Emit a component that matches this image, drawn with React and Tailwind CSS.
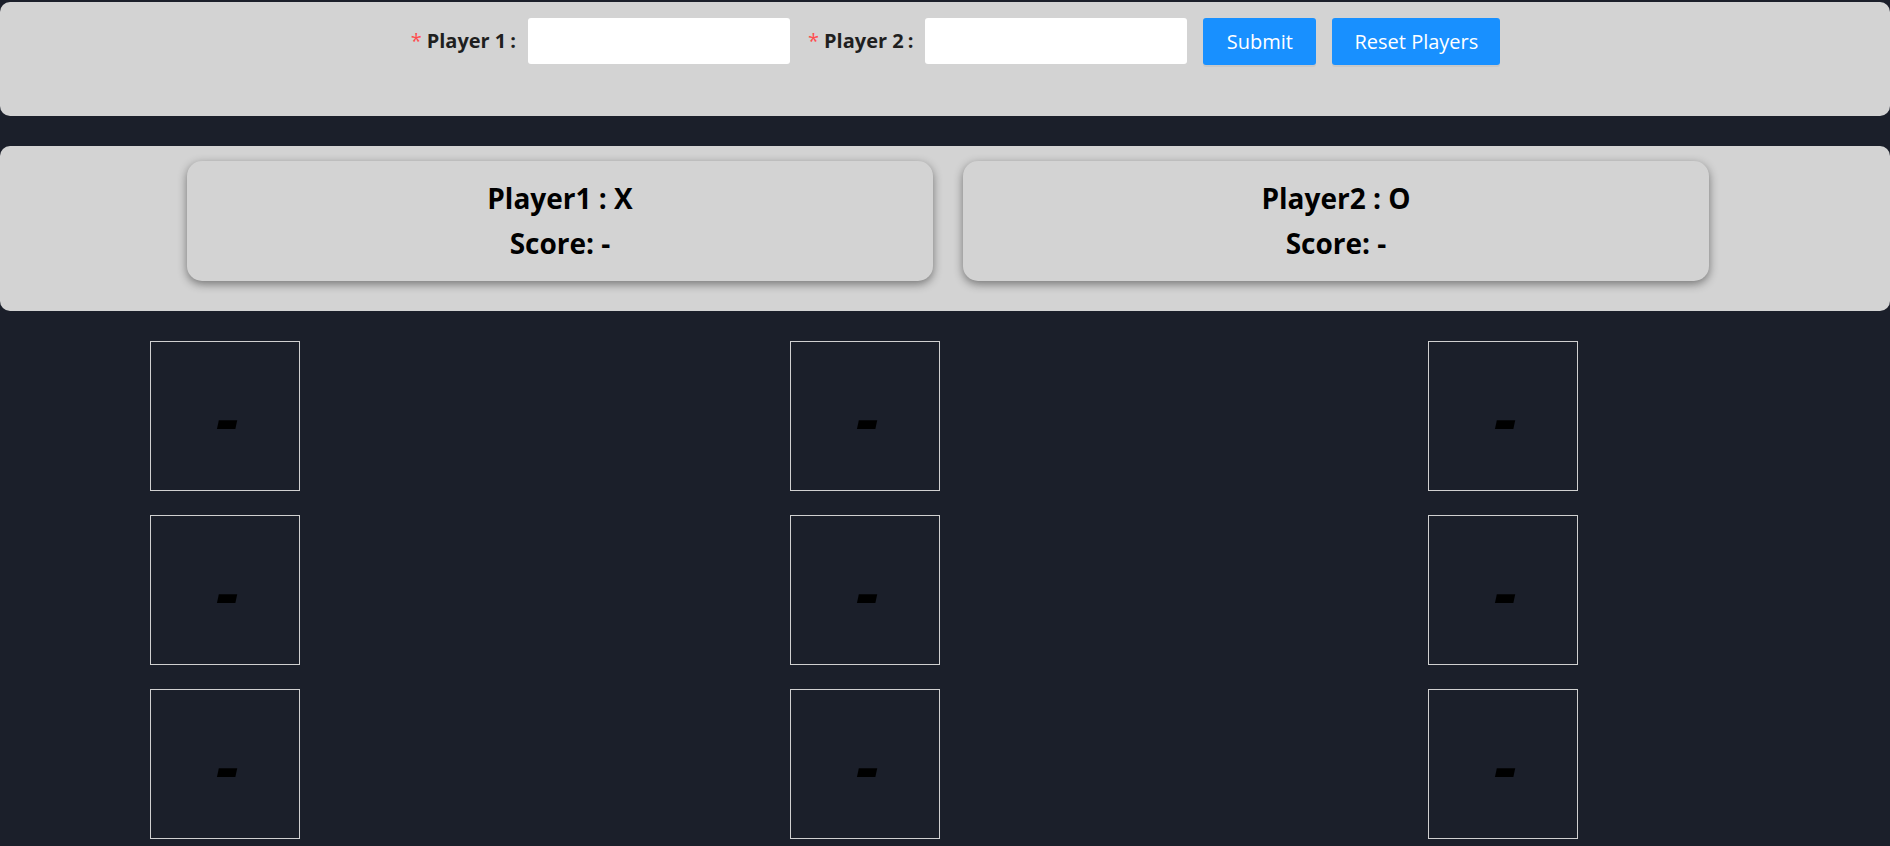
import React, { useState } from 'react';

const font = { fontFamily: '"Open Sans", "Noto Sans", sans-serif' };

export default function App() {
  const [p1, setP1] = useState('');
  const [p2, setP2] = useState('');
  const cells = Array.from({ length: 9 }, () => '-');

  return (
    <div className="min-h-screen bg-[#1b1f2a] pt-[2px] font-['Open_Sans','Noto_Sans',sans-serif]">
      {/* Player form */}
      <div className="h-[114px] bg-[#d3d3d3] rounded-[10px] pt-[16px] pl-[21px] flex justify-center items-start">
        <div className="flex items-center">
          <FieldLabel text="Player 1" />
          <input
            value={p1}
            onChange={(e) => setP1(e.target.value)}
            className="w-[262px] h-[46px] bg-white rounded-[3px] outline-none px-3 text-[21px]"
          />
        </div>
        <div className="flex items-center ml-[18px]">
          <FieldLabel text="Player 2" />
          <input
            value={p2}
            onChange={(e) => setP2(e.target.value)}
            className="w-[262px] h-[46px] bg-white rounded-[3px] outline-none px-3 text-[21px]"
          />
        </div>
        <button className="ml-[16px] w-[113px] h-[47px] bg-[#1890ff] text-white text-[20px] rounded-[3px] shadow-[0_2px_0_rgba(0,0,0,0.05)]">
          Submit
        </button>
        <button className="ml-[16px] w-[168px] h-[47px] bg-[#1890ff] text-white text-[20px] rounded-[3px] shadow-[0_2px_0_rgba(0,0,0,0.05)]">
          Reset Players
        </button>
      </div>

      {/* Score cards */}
      <div className="mt-[30px] h-[165px] bg-[#d3d3d3] rounded-[10px] pt-[15px] flex justify-center gap-[30px] pl-[6px]">
        <ScoreCard name="Player1" mark="X" />
        <ScoreCard name="Player2" mark="O" />
      </div>

      {/* Board */}
      <div className="pt-[30px] pl-[150px] grid grid-cols-[640px_638px_150px] gap-y-[24px]">
        {cells.map((c, i) => (
          <div
            key={i}
            className="w-[150px] h-[150px] border border-[#d0d0d0] flex items-center justify-center"
          >
            <span className="text-black text-[72px] font-bold italic leading-none ml-[4px]" style={font}>
              {c}
            </span>
          </div>
        ))}
      </div>
    </div>
  );
}

function FieldLabel({ text }) {
  return (
    <label className="flex items-center text-[20px] font-bold text-[#1f1f1f] mr-[12px]">
      <span className="text-[#ff4d4f] text-[20px] font-normal mr-[5px]">*</span>
      {text}
      <span className="ml-[4px]">:</span>
    </label>
  );
}

function ScoreCard({ name, mark }) {
  return (
    <div className="w-[746px] h-[120px] bg-[#d3d3d3] rounded-[15px] shadow-[0_3px_10px_rgba(0,0,0,0.45)] flex flex-col items-center justify-center">
      <div className="text-[28px] font-bold text-black leading-[45px]">
        {name} : {mark}
      </div>
      <div className="text-[28px] font-bold text-black leading-[45px]">Score: -</div>
    </div>
  );
}
